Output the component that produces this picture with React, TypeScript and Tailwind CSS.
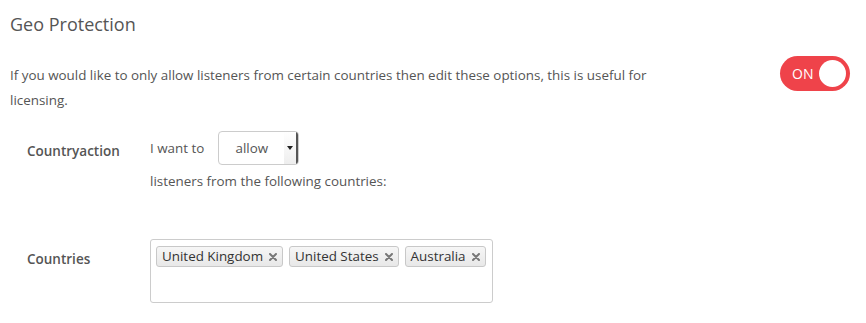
const countries = ["United Kingdom", "United States", "Australia"];

export default function App() {
  return (
    <div
      className="w-[866px] h-[323px] bg-white text-[#555] overflow-hidden"
      style={{ fontFamily: '"Open Sans", sans-serif' }}
    >
      {/* Title */}
      <div className="pl-[10px] pt-[11px] text-[18px] leading-[26px] text-[#555]">Geo Protection</div>

      {/* Description + toggle */}
      <div className="flex items-start justify-between pl-[10px] pr-[16px] mt-[26px]">
        <p className="w-[660px] text-[13.4px] leading-[25px] text-[#555]">
          If you would like to only allow listeners from certain countries then edit these options, this is useful for
          licensing.
        </p>
        <div className="mt-[-7px] flex items-center w-[70px] h-[35px] rounded-full bg-[#ef434a] pl-[12px] pr-[4px]">
          <span className="text-[14px] text-white leading-none">ON</span>
          <span className="ml-auto w-[27px] h-[27px] rounded-full bg-white" />
        </div>
      </div>

      {/* Country action */}
      <div className="flex pl-[27px] mt-[18px]">
        <div className="w-[123px] pt-[10px] text-[13.5px] font-semibold leading-[20px]">Countryaction</div>
        <div className="flex flex-col">
          <div className="flex items-center">
            <span className="text-[13.4px] leading-[20px] mr-[14px]">I want to</span>
            <div className="flex w-[81px] h-[34px] rounded-[4px] border border-[#ccc] bg-white overflow-hidden">
              <span className="flex-1 flex items-center justify-center text-[13.4px] text-[#555]">allow</span>
              <span className="w-[14px] flex items-center justify-center border-r-[2px] border-[#555] bg-gradient-to-b from-[#fff] to-[#eee]">
                <svg width="6" height="4" viewBox="0 0 6 4">
                  <path d="M0 0 L6 0 L3 4 Z" fill="#222" />
                </svg>
              </span>
            </div>
          </div>
          <div className="text-[13.4px] leading-[20px] mt-[6px]">listeners from the following countries:</div>
        </div>
      </div>

      {/* Countries */}
      <div className="flex items-start pl-[27px] mt-[48px]">
        <div className="w-[123px] pt-[10px] text-[13.5px] font-semibold leading-[20px]">Countries</div>
        <div className="w-[343px] h-[64px] rounded-[3px] border border-[#ccc] bg-white px-[5px] pt-[6px]">
          <div className="flex gap-[6px]">
            {countries.map((c) => (
              <span
                key={c}
                className="flex items-center whitespace-nowrap h-[21px] rounded-[3px] border border-[#c8c8c8] bg-gradient-to-b from-[#f6f6f6] to-[#e8e8e8] pl-[5px] pr-[5px] text-[13.4px] text-[#333] leading-none"
              >
                {c}
                <svg className="ml-[6px]" width="8" height="8" viewBox="0 0 8 8">
                  <path d="M1 1 L7 7 M7 1 L1 7" stroke="#777" strokeWidth="2" strokeLinecap="round" />
                </svg>
              </span>
            ))}
          </div>
        </div>
      </div>
    </div>
  );
}
